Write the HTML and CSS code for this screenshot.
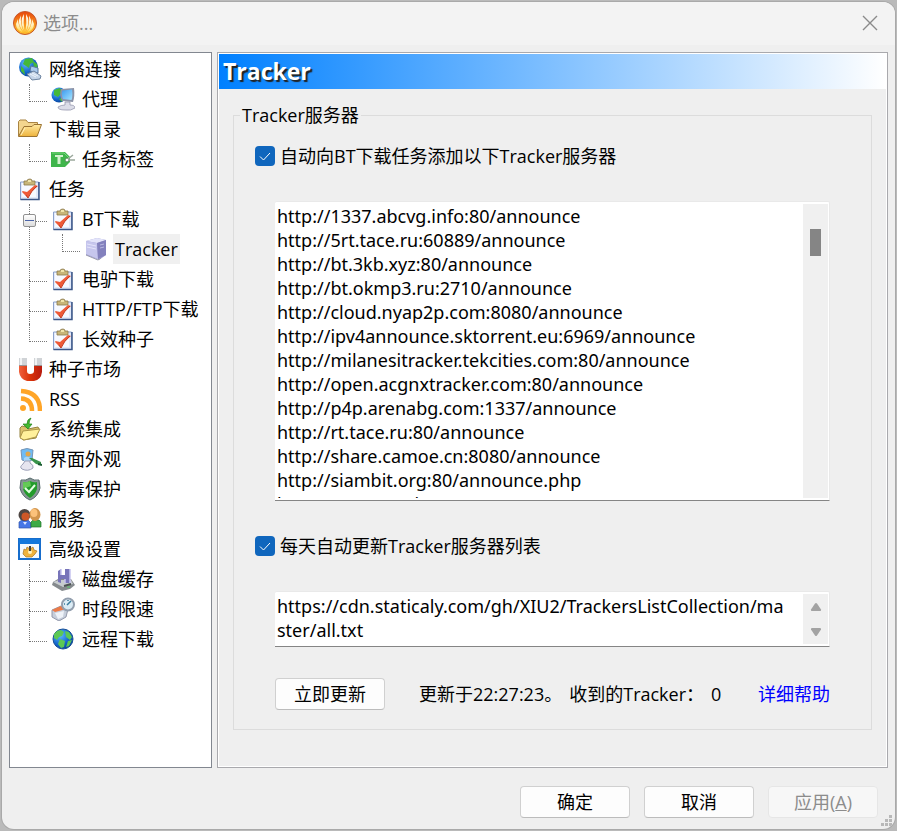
FILE: index.html
```html
<!DOCTYPE html>
<html lang="zh-CN">
<head>
  <meta charset="UTF-8" />
  <meta name="viewport" content="width=device-width, initial-scale=1">
  <title>选项...</title>
  <link rel="stylesheet" href="styles.css">
</head>
<body>

  <!-- Shared icons -->
  <svg class="sprite" aria-hidden="true">
    <defs>
      <linearGradient id="gOrange" x1="0" y1="0" x2="0" y2="1"><stop offset="0" stop-color="#e8450c"/><stop offset=".6" stop-color="#f99a1c"/><stop offset="1" stop-color="#ffc02c"/></linearGradient>
      <linearGradient id="gRay" x1="0" y1="0" x2="0" y2="1"><stop offset="0" stop-color="#fff"/><stop offset=".6" stop-color="#fff0c0"/><stop offset="1" stop-color="#ffd848"/></linearGradient>
      <linearGradient id="gFolder" x1="0" y1="0" x2="0" y2="1"><stop offset="0" stop-color="#ffe9a0"/><stop offset="1" stop-color="#eeb33c"/></linearGradient>
      <linearGradient id="gRed" x1="0" y1="0" x2="1" y2="0"><stop offset="0" stop-color="#f0603c"/><stop offset=".5" stop-color="#d93208"/><stop offset="1" stop-color="#b81c10"/></linearGradient>
      <linearGradient id="gScreen" x1="0" y1="0" x2="1" y2="1"><stop offset="0" stop-color="#3c9af0"/><stop offset="1" stop-color="#a4e4ff"/></linearGradient>
      <radialGradient id="gGlobe" cx=".35" cy=".3" r=".8"><stop offset="0" stop-color="#62c0ff"/><stop offset=".6" stop-color="#1466cc"/><stop offset="1" stop-color="#083c8c"/></radialGradient>

      <symbol id="i-logo" viewBox="0 0 24 24">
        <circle cx="12" cy="12" r="11.500" fill="url(#gOrange)" stroke="#c5572c"/>
        <path d="M5 8Q5 15 10 21.500Q3 19 3 13ZM8 4.500Q7 13 11 21.500Q5 15 6 9ZM11 3Q10 12 11.700 21.500Q7.500 13 9 7ZM13 3Q14 12 12.300 21.500Q16.500 13 15 7ZM16 4.500Q17 13 13 21.500Q19 15 18 9ZM19 8Q19 15 14 21.500Q21 19 21 13Z" fill="url(#gRay)"/>
      </symbol>

      <symbol id="i-network" viewBox="0 0 24 24">
        <circle cx="10.500" cy="10" r="9.500" fill="url(#gGlobe)"/>
        <path d="M7 2L14 1L16 5L12 7L11 11L8 9L5 7ZM15 4L19 7L20 12L16 11ZM3 9L6 12L7 18L3 14Z" fill="#45b83a"/>
        <path d="M13 9L20 11L20 16L12 14Z" fill="#a8c9ee" stroke="#58779f"/>
        <path d="M9 17L16 14L23 19L22 22L14 23Z" fill="#c4d4e8" stroke="#6c839f"/>
        <path d="M12 17L18 20M14 16L20 19" stroke="#eef4fb"/>
      </symbol>

      <symbol id="i-proxy" viewBox="0 0 24 24">
        <circle cx="8" cy="8" r="7.500" fill="url(#gGlobe)"/>
        <path d="M3 3L9 1L11 5L7 10L3 8ZM8 12L12 10L11 15Z" fill="#45b83a"/>
        <path d="M10 2L23 1Q24 9 22 15L11 14Q8 8 10 2Z" fill="#8b93a8"/>
        <path d="M11.500 3.500L21 2.500Q22 9 20.500 13L12 12Q10 7 11.500 3.500Z" fill="url(#gScreen)"/>
        <path d="M14 15L19 15L19 18Q24 18 24 21Q20 24 14 23Q7 23 7 20Q10 18 14 18Z" fill="#dcdde8" stroke="#8c8ea6" stroke-width=".7"/>
      </symbol>

      <symbol id="i-folder" viewBox="0 0 24 24">
        <path d="M.500 19V4.500L2 3H8L10 5.500H19.500V9" fill="#f4d68e" stroke="#a98442"/>
        <path d="M.500 19.500L6 9.500H14L16 7.500H23.500L19 19.500Z" fill="url(#gFolder)" stroke="#9b7332"/>
        <path d="M3 18L7 11" stroke="#fff2c0"/>
      </symbol>

      <symbol id="i-tag" viewBox="0 0 24 24">
        <path d="M0 5H14L19 10V15L14 20H0Z" fill="#3fb54b"/>
        <path d="M1 6H13L18 11" stroke="#78d67c" fill="none"/>
        <path d="M4 8H12V10H9.500V17H6.500V10H4Z" fill="#d5f2d0"/>
        <circle cx="16" cy="13" r="2" fill="#fff" stroke="#4a8b50"/>
        <path d="M17 12L22 8M17 13H24" stroke="#9ba89c" stroke-width="1.500"/>
      </symbol>

      <symbol id="i-task" viewBox="0 0 24 24">
        <path d="M2.500 5H20.500V22.500H2.500Z" fill="#e2eafa" stroke="#8ba0cb"/>
        <path d="M21 5V22.500H2.500" fill="none" stroke="#3d5788" stroke-width="1.500"/>
        <path d="M4 6L18 6V20H4Z" fill="#f7f9ff"/>
        <path d="M6 4H9Q9 2 12 2Q14 2 14 4H17V8H6Z" fill="#c8b679" stroke="#8b784a" stroke-width=".8"/>
        <path d="M10 4H13" stroke="#fff4bd" stroke-width="1.500"/>
        <path d="M4.500 14L9 15L17 8L20 9Q13 14 10 21L4 15Z" fill="#ef5a37"/>
        <path d="M8 18L10 21Q13 14 19 9" fill="none" stroke="#c43b23"/>
      </symbol>

      <symbol id="i-server" viewBox="0 0 24 24">
        <path d="M2 4L13 1L22 3V18L15 23L2 18Z" fill="#a3a2d5"/>
        <path d="M2 4L13 1L22 3L13 6Z" fill="#e3e4fa"/>
        <path d="M2 4L13 6L14 22L2 17Z" fill="#c6c6ed"/>
        <path d="M13 6L22 3V18L14 22Z" fill="#8381bd"/>
        <path d="M3 7L12 9M3 10L12 12" stroke="#e4e4fb"/>
        <path d="M16 8L20 7M16 11L20 10" stroke="#b9b8e1"/>
        <path d="M2 18L14 23L17 21" fill="none" stroke="#9a9bae"/>
      </symbol>

      <symbol id="i-magnet" viewBox="0 0 24 24">
        <path d="M1 1H9V14Q9 17 12 17Q16 17 16 14V1H24V15Q23 23 16 24H9Q2 22 1 15Z" fill="url(#gRed)"/>
        <path d="M1 1H9V9H1ZM16 1H24V9H16Z" fill="#d0d3d6"/>
        <path d="M1 8.500H9M16 8.500H24" stroke="#9b9696"/>
        <path d="M3 1V8M18 1V8" stroke="#f1f3f4" stroke-width="2"/>
      </symbol>

      <symbol id="i-rss" viewBox="0 0 24 24">
        <circle cx="5" cy="21" r="3" fill="#ffa528"/>
        <path d="M3 11.500Q14 12 14 24M3 4Q22 5 22 24" fill="none" stroke="#ffa528" stroke-width="4.500"/>
      </symbol>

      <symbol id="i-integrate" viewBox="0 0 24 24">
        <path d="M2 11L4 9L8 10L10 12L20 10L21 12L18 21L5 23L2 20Z" fill="#dbc16c" stroke="#94823f"/>
        <path d="M2 21L5 14L22 12L18 20L6 23Z" fill="#fff09b" stroke="#ad9648"/>
        <path d="M13 1Q9 2 9 7H5L10 12L14 7H11Q11 4 13 1Z" fill="#42b92f" stroke="#23811c" stroke-width=".7"/>
      </symbol>

      <symbol id="i-look" viewBox="0 0 24 24">
        <path d="M3 3Q9 0 15 3L14 13Q9 16 4 13Z" fill="#6fbbf4" stroke="#7895b5"/>
        <circle cx="10" cy="7" r="2.500" fill="#e0a74c"/>
        <path d="M6 11Q10 8 13 12L12 14H6Z" fill="#a7d5f7"/>
        <path d="M7 14H12V16Q16 18 15 21Q10 25 4 22Q1 20 5 17Z" fill="#e6e5ef" stroke="#9ca0b7"/>
        <path d="M11 11L14 11L23 15L23 18L18 17Z" fill="#38934a"/>
        <path d="M20 17L24 18" stroke="#1a5931" stroke-width="2"/>
      </symbol>

      <symbol id="i-shield" viewBox="0 0 24 24">
        <path d="M12 1Q8 4 3 3L2 11Q4 20 12 23Q20 20 22 11L21 3Q16 4 12 1Z" fill="#889696" stroke="#55696b"/>
        <path d="M12 4Q8 6 5 5L5 12Q7 18 12 21Q17 18 19 12V5Q16 6 12 4Z" fill="#239b2b"/>
        <path d="M12 4Q8 6 5 5V12L13 9Z" fill="#64ca56"/>
        <path d="M7 11L11 15L17 8" fill="none" stroke="#e4ffe3" stroke-width="2"/>
      </symbol>

      <symbol id="i-users" viewBox="0 0 24 24">
        <path d="M1 15L4 13H10L13 16V21H1Z" fill="#4777e6" stroke="#3358aa" stroke-width=".7"/>
        <path d="M13 15L15 13H21L23 15V20H13Z" fill="#3caa45" stroke="#24742c" stroke-width=".7"/>
        <circle cx="6.500" cy="8" r="6" fill="#4d4643"/>
        <circle cx="7.500" cy="9.500" r="4" fill="#cc5727"/>
        <ellipse cx="17" cy="7.500" rx="5.500" ry="6.500" fill="#d2954c"/>
        <ellipse cx="16" cy="6" rx="3.500" ry="4" fill="#fcc27a"/>
        <path d="M5 15L7 18L9 15" fill="#dce7ff"/>
      </symbol>

      <symbol id="i-advanced" viewBox="0 0 24 24">
        <path d="M1 2H22V22H1Z" fill="#f4faff" stroke="#176dcc" stroke-width="2"/>
        <path d="M1 2H22V7H1Z" fill="#1478dc"/>
        <path d="M6 12L8 13L9 10L12 12L15 10L16 13L19 14L17 17L14 20H8L5 17Z" fill="#eeb23d" stroke="#a97521" stroke-width=".7"/>
        <circle cx="12" cy="15" r="2" fill="#fff2bd"/>
        <path d="M12 9V14" stroke="#44403b" stroke-width="2"/>
      </symbol>

      <symbol id="i-disk" viewBox="0 0 24 24">
        <path d="M2 15L7 12H20L24 18L19 22L11 24L1 18Z" fill="#858a8d"/>
        <path d="M2 15L8 13H20L22 17L12 20Z" fill="#c7cccf"/>
        <path d="M7 4L10 2V8H14V2L19 2V16H14V12H10V16L7 15Z" fill="#7774b9"/>
        <path d="M10 2V8M14 12V16M19 2V16" stroke="#c6c3ef" stroke-width="1.500"/>
        <path d="M13 19L20 17" stroke="#4c5253" stroke-width="2"/>
        <path d="M16 20H19" stroke="#57c967"/>
      </symbol>

      <symbol id="i-time" viewBox="0 0 24 24">
        <path d="M1 13L10 9L17 12L15 20L8 24L1 20Z" fill="#c6cedb" stroke="#9298aa"/>
        <path d="M1 13L10 9L15 12L4 15Z" fill="#ec7b48"/>
        <path d="M4 16L13 14L12 20L7 22Z" fill="#eef2f8"/>
        <circle cx="17" cy="7.500" r="6" fill="#dcecf5" stroke="#939fae" stroke-width="2"/>
        <path d="M16 8L20 4M13 7H14M17 3V4" stroke="#3a7c9c" stroke-width="1.500"/>
      </symbol>

      <symbol id="i-globe" viewBox="0 0 24 24">
        <circle cx="12" cy="12" r="10" fill="url(#gGlobe)" stroke="#194f96"/>
        <path d="M3 7L6 4L10 3L13 5L11 9L8 10L6 13L3 11ZM9 12L14 14L13 20L10 21L7 17ZM14 4L18 5L21 10L19 13L15 10ZM17 14L21 13L18 19L15 20Z" fill="#5cc854"/>
      </symbol>
    </defs>
  </svg>

  <div class="window">
    <header class="titlebar">
      <svg class="logo" aria-hidden="true"><use href="#i-logo"/></svg>
      <h1>选项...</h1>
      <button class="close" type="button" aria-label="关闭">
        <svg viewBox="0 0 16 16"><path d="M1 1L15 15M15 1L1 15" fill="none" stroke="#8a8a8a" stroke-width="1.400"/></svg>
      </button>
    </header>

    <div class="main">
      <!-- Category tree -->
      <nav class="tree">
        <ul>
          <li><a href="#network"><svg><use href="#i-network"/></svg><span>网络连接</span></a>
            <ul>
              <li><a href="#proxy"><svg><use href="#i-proxy"/></svg><span>代理</span></a></li>
            </ul>
          </li>
          <li><a href="#folder"><svg><use href="#i-folder"/></svg><span>下载目录</span></a>
            <ul>
              <li><a href="#tag"><svg><use href="#i-tag"/></svg><span>任务标签</span></a></li>
            </ul>
          </li>
          <li><a href="#task"><svg><use href="#i-task"/></svg><span>任务</span></a>
            <ul>
              <li><button class="toggle" type="button" aria-label="折叠" aria-expanded="true"></button><a href="#bt"><svg><use href="#i-task"/></svg><span>BT下载</span></a>
                <ul>
                  <li><a href="#tracker" aria-current="page"><svg><use href="#i-server"/></svg><span>Tracker</span></a></li>
                </ul>
              </li>
              <li><a href="#emule"><svg><use href="#i-task"/></svg><span>电驴下载</span></a></li>
              <li><a href="#http"><svg><use href="#i-task"/></svg><span>HTTP/FTP下载</span></a></li>
              <li><a href="#seed"><svg><use href="#i-task"/></svg><span>长效种子</span></a></li>
            </ul>
          </li>
          <li><a href="#market"><svg><use href="#i-magnet"/></svg><span>种子市场</span></a></li>
          <li><a href="#rss"><svg><use href="#i-rss"/></svg><span>RSS</span></a></li>
          <li><a href="#system"><svg><use href="#i-integrate"/></svg><span>系统集成</span></a></li>
          <li><a href="#look"><svg><use href="#i-look"/></svg><span>界面外观</span></a></li>
          <li><a href="#virus"><svg><use href="#i-shield"/></svg><span>病毒保护</span></a></li>
          <li><a href="#service"><svg><use href="#i-users"/></svg><span>服务</span></a></li>
          <li><a href="#advanced"><svg><use href="#i-advanced"/></svg><span>高级设置</span></a>
            <ul>
              <li><a href="#disk"><svg><use href="#i-disk"/></svg><span>磁盘缓存</span></a></li>
              <li><a href="#time"><svg><use href="#i-time"/></svg><span>时段限速</span></a></li>
              <li><a href="#remote"><svg><use href="#i-globe"/></svg><span>远程下载</span></a></li>
            </ul>
          </li>
        </ul>
      </nav>

      <!-- Tracker page -->
      <section class="panel" id="tracker">
        <h2>Tracker</h2>
        <fieldset>
          <legend>Tracker服务器</legend>

          <label class="check"><input type="checkbox" checked><span>自动向BT下载任务添加以下Tracker服务器</span></label>

          <div class="textbox list">
            <textarea aria-label="Tracker服务器" spellcheck="false" wrap="off">http://1337.abcvg.info:80/announce
http://5rt.tace.ru:60889/announce
http://bt.3kb.xyz:80/announce
http://bt.okmp3.ru:2710/announce
http://cloud.nyap2p.com:8080/announce
http://ipv4announce.sktorrent.eu:6969/announce
http://milanesitracker.tekcities.com:80/announce
http://open.acgnxtracker.com:80/announce
http://p4p.arenabg.com:1337/announce
http://rt.tace.ru:80/announce
http://share.camoe.cn:8080/announce
http://siambit.org:80/announce.php
http://t.nyaatracker.com:80/announce</textarea>
            <div class="scrollbar"><div class="thumb"></div></div>
          </div>

          <label class="check"><input type="checkbox" checked><span>每天自动更新Tracker服务器列表</span></label>

          <div class="textbox url">
            <textarea aria-label="Tracker服务器列表" spellcheck="false">https://cdn.staticaly.com/gh/XIU2/TrackersListCollection/master/all.txt</textarea>
            <div class="scrollbar">
              <svg viewBox="0 0 12 10"><path d="M5 1.500Q6 .500 7 1.500L11 7.500Q11.500 9 10 9H2Q.500 9 1 7.500Z" fill="#a3a3a3"/></svg>
              <svg viewBox="0 0 12 10"><path d="M5 8.500Q6 9.500 7 8.500L11 2.500Q11.500 1 10 1H2Q.500 1 1 2.500Z" fill="#a3a3a3"/></svg>
            </div>
          </div>

          <div class="update">
            <button class="btn" type="button">立即更新</button>
            <p><span>更新于22:27:23。</span><span>收到的Tracker：</span><span>0</span></p>
            <a href="#help">详细帮助</a>
          </div>
        </fieldset>
      </section>
    </div>

    <footer class="actions">
      <button class="btn" type="button">确定</button>
      <button class="btn" type="button">取消</button>
      <button class="btn" type="button" disabled>应用(<u>A</u>)</button>
    </footer>
    <svg class="grip" viewBox="0 0 12 12" aria-hidden="true"><path d="M8 0h3v3h-3zM4 4h3v3h-3zM8 4h3v3h-3zM0 8h3v3h-3zM4 8h3v3h-3zM8 8h3v3h-3z" fill="#b8b8b8"/></svg>
  </div>

</body>
</html>
```
FILE: styles.css
```css
* {
  box-sizing: border-box;
}

body {
  display: flex;
  min-height: 100vh;
  margin: 0;
  padding: 2px;
  background: #bababa;
  color: #000;
  font-family: "Open Sans", "Noto Sans CJK SC", sans-serif;
  font-size: 18px;
  line-height: 24px;
}

button,
textarea {
  font: inherit;
  color: inherit;
}

ul {
  margin: 0;
  padding: 0;
  list-style: none;
}

.sprite {
  position: absolute;
  width: 0;
  height: 0;
}

.window {
  position: relative;
  display: flex;
  flex: 1;
  flex-direction: column;
  min-width: 0;
  border-radius: 12px;
  background: #efefef;
  overflow: hidden;
  box-shadow: 0 0 0 1px #a9a9a9;
}

/* Title bar */
.titlebar {
  display: flex;
  align-items: center;
  height: 43px;
  padding: 0 17px 2px 11px;
  background: #f3f3f3;
}

.logo {
  width: 24px;
  height: 24px;
}

.titlebar h1 {
  flex: 1;
  margin: 0 0 0 6px;
  color: #8c8c8c;
  font-size: 18px;
  font-weight: 400;
}

.close {
  display: flex;
  padding: 0;
  border: 0;
  background: none;
}

.close svg {
  width: 16px;
  height: 16px;
}

.main {
  display: flex;
  flex: 1;
  gap: 5px;
  padding: 7px 7px 0;
}

/* Tree */
.tree {
  flex: 0 0 203px;
  padding: 1px 0 0 8px;
  border: 1px solid #828790;
  background: #fff;
}

.tree li {
  position: relative;
}

.tree a {
  display: flex;
  align-items: center;
  gap: 5px;
  height: 30px;
  color: #000;
  text-decoration: none;
  white-space: nowrap;
}

.tree a svg {
  flex: none;
  width: 24px;
  height: 24px;
}

.tree a span {
  padding: 3px 2px;
}

.tree a[aria-current] span {
  background: #f0f0f0;
}

.tree ul ul {
  padding-left: 33px;
}

/* connector lines */
.tree ul ul > li::before {
  content: "";
  position: absolute;
  top: 0;
  left: -22px;
  width: 17px;
  height: 17px;
  border-left: 1px dotted #777;
  border-bottom: 1px dotted #777;
}

.tree ul ul > li:not(:last-child)::after {
  content: "";
  position: absolute;
  top: 16px;
  bottom: 0;
  left: -22px;
  border-left: 1px dotted #777;
}

.toggle {
  position: absolute;
  z-index: 1;
  top: 10px;
  left: -28px;
  width: 13px;
  height: 13px;
  padding: 0;
  border: 1px solid #919191;
  border-radius: 2px;
  background: linear-gradient(#4b63a7, #4b63a7) center / 9px 1px no-repeat, linear-gradient(#fff, #dcdcdc);
}

/* Right side */
.panel {
  display: flex;
  flex: 1;
  flex-direction: column;
  min-width: 0;
  padding: 1px;
  border: 1px solid #a9a9ad;
  box-shadow: inset 0 0 0 1px #fff;
}

.panel h2 {
  margin: 0;
  padding: 0 4px;
  background: linear-gradient(to right, #0080ff, #fff);
  color: #fff;
  font-size: 23px;
  line-height: 35px;
  text-shadow: 2px 2px 1px #222;
}

fieldset {
  flex: 1;
  min-width: 0;
  margin: 14px 14px 36px;
  padding: 0 41px 19px 21px;
  border: 1px solid #dcdcdc;
}

legend {
  margin-left: -15px;
  padding: 0 2px;
}

.check {
  display: flex;
  align-items: center;
  gap: 5px;
  width: fit-content;
  margin: 17px 0 33px;
}

.check input {
  appearance: none;
  width: 20px;
  height: 20px;
  margin: 0;
  border-radius: 4px;
  background: #0f66bd url("data:image/svg+xml,%3Csvg xmlns='http://www.w3.org/2000/svg' viewBox='0 0 20 20'%3E%3Cpath d='M5 10.500l3.500 3.500 6.500-7' fill='none' stroke='white' stroke-width='1'/%3E%3C/svg%3E");
}

.textbox {
  display: flex;
  margin-left: 20px;
  padding: 2px 1px 2px 2px;
  border: 1px solid #e9e9e9;
  border-width: 1px 1px 1px 0;
  border-bottom-color: #858585;
  border-radius: 2px 2px 0 0;
  background: #fff;
}

.textbox textarea {
  flex: 1;
  min-width: 0;
  padding: 0;
  border: 0;
  outline: 0;
  background: none;
  font-family: "Noto Sans", "Noto Sans CJK SC", sans-serif;
  resize: none;
  overflow: hidden;
  word-break: break-all;
}

.list {
  height: 300px;
}

.url {
  height: 56px;
}

.url textarea {
  padding-right: 14px;
}

.scrollbar {
  display: flex;
  flex: 0 0 25px;
  flex-direction: column;
  align-items: center;
  justify-content: space-between;
  padding: 8px 0 7px;
  background: #f0f0f0;
}

.scrollbar svg {
  width: 12px;
  height: 10px;
}

.thumb {
  width: 11px;
  height: 27px;
  margin-top: 17px;
  background: #858585;
}

.btn {
  width: 110px;
  height: 32px;
  padding: 0;
  border: 1px solid #d0d0d0;
  border-bottom-color: #bcbcbc;
  border-radius: 4px;
  background: #fdfdfd;
}

.btn:disabled {
  border-color: #e6e6e6;
  background: #f7f7f7;
  color: #8c8c8c;
}

.list + .check {
  margin-top: 33px;
}

.update {
  display: flex;
  align-items: center;
  margin: 31px 0 0 20px;
  white-space: nowrap;
}

.update p {
  display: flex;
  flex: 1;
  gap: 7px;
  margin: 0 0 0 34px;
}

.update a {
  color: #00f;
  text-decoration: none;
}

/* Bottom buttons */
.actions {
  display: flex;
  justify-content: flex-end;
  gap: 14px;
  padding: 18px 17px 11px;
}

.grip {
  position: absolute;
  right: 2px;
  bottom: 2px;
  width: 12px;
  height: 12px;
}
```
